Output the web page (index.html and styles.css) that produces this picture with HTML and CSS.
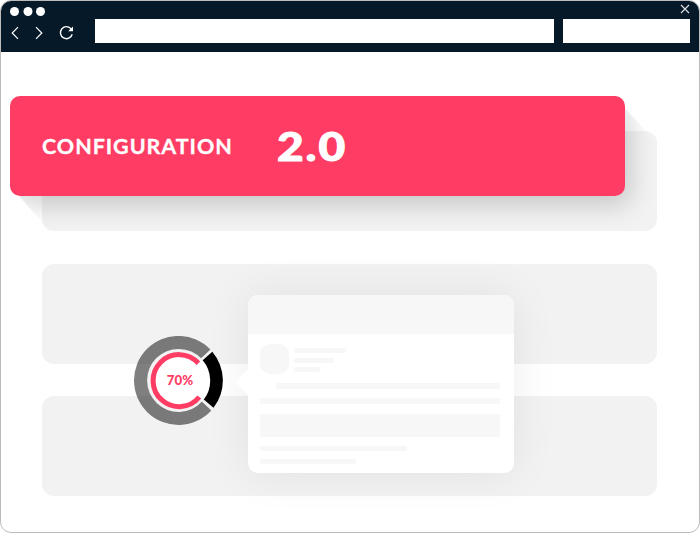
FILE: index.html
```html
<!DOCTYPE html>
<html lang="en">
<head>
<meta charset="utf-8">
<title>Configuration 2.0</title>
<link rel="stylesheet" href="styles.css">
</head>
<body>
<div class="window">
  <header class="toolbar">
    <svg class="controls" width="94" height="51" viewBox="1 1 94 51" fill="none" stroke="#fff" stroke-width="1.2">
      <g fill="#fff" stroke="none"><circle cx="14.5" cy="11.5" r="4.5"/><circle cx="28" cy="11.5" r="4.5"/><circle cx="40.5" cy="11.5" r="4.5"/></g>
      <path d="M18 27.2 12.2 33l5.8 5.8M36 27.2l5.8 5.8-5.8 5.8"/>
      <path d="M71.3 29.2A6 6 0 1 0 72.2 34.2" stroke-width="1.4"/>
      <path d="M73 26.5v4.8h-4.8z" fill="#fff" stroke="none"/>
    </svg>
    <div class="address"></div>
    <div class="search"></div>
    <svg class="close" width="10" height="10" viewBox="0 0 10 10" stroke="#dfe3e6" stroke-width="1.1"><path d="M1 1l8 8M9 1 1 9"/></svg>
  </header>
  <main class="page">
    <section class="panel">
      <div class="cast"></div>
      <div class="banner">
        <span class="label">CONFIGURATION</span>
        <span class="version">2.0</span>
      </div>
    </section>
    <section class="panel"></section>
    <section class="panel"></section>
  </main>
  <div class="gauge">
    <svg width="90" height="90" viewBox="134 336 90 90" fill="none">
      <circle cx="178.5" cy="380.5" r="31.5" fill="#f2f2f2"/>
      <path d="M179 380.5 201.5 358.5A31 31 0 0 1 202 402Z" fill="#fff"/>
      <circle cx="179.3" cy="380.8" r="26" fill="#fff"/>
      <path d="M210.4 349.4A44.5 44.5 0 1 0 211.3 410.5L202 401.5A31.5 31.5 0 1 1 201.5 358.8Z" fill="#000" fill-opacity=".5"/>
      <path d="M201 360.5 213 350M202.5 400 214 409.5" stroke="#f2f2f2" stroke-width="3.5"/>
      <path d="M212.3 351.7A44.5 44.5 0 0 1 213.5 407.8L203.8 399.6A31.5 31.5 0 0 0 202.7 360.2Z" fill="#000"/>
      <path d="M198.4 363.2A26 26 0 1 0 199.3 397" stroke="#fe3c64" stroke-width="5"/>
    </svg>
    <span class="percent">70%</span>
  </div>
  <article class="card">
    <div class="card-head"></div>
    <div class="profile">
      <div class="avatar"></div>
      <div class="lines"><i class="bar name"></i><i class="bar role"></i><i class="bar tag"></i></div>
    </div>
    <i class="bar first"></i>
    <i class="bar second"></i>
    <i class="bar block"></i>
    <i class="bar third"></i>
    <i class="bar fourth"></i>
  </article>
</div>
</body>
</html>
```
FILE: styles.css
```css
* { box-sizing: border-box; }
body { margin: 0; background: #fff; font-family: Lato, sans-serif; }
.window {
  position: relative;
  width: 700px;
  height: 533px;
  border: 1px solid #bcbcbc;
  border-radius: 11px;
  overflow: hidden;
  background: #fff;
}
.toolbar {
  position: relative;
  display: flex;
  height: 51px;
  background: #051929;
}
.controls { flex: none; }
.address, .search { height: 24px; margin-top: 18px; background: #fff; }
.address { width: 459px; }
.search { width: 127px; margin-left: 9px; }
.close { position: absolute; right: 9px; top: 3px; }
.page {
  display: flex;
  flex-direction: column;
  gap: 32px;
  padding: 79px 42px 0 41px;
}
.panel {
  position: relative;
  width: 615px;
  height: 100px;
  border-radius: 12px;
  background: #f2f2f2;
}
.panel:first-child { margin-bottom: 1px; }
.banner {
  position: absolute;
  left: -32px;
  top: -35px;
  width: 615px;
  height: 100px;
  border-radius: 10px;
  background: #fe3c64;
  color: #fff;
  display: flex;
  align-items: center;
  padding-left: 32px;
}
.cast {
  position: absolute;
  left: -32px;
  top: -35px;
  width: 647px;
  height: 135px;
  clip-path: polygon(0 91px, 8px 99px, 37px 132px, 60px 135px, 647px 135px, 647px 60px, 638px 37px, 615px 12px, 607px 0, 0 0);
}
.cast::before {
  content: "";
  position: absolute;
  left: 0;
  top: 0;
  width: 615px;
  height: 100px;
  border-radius: 10px;
  box-shadow: 5px 9px 26px rgba(0, 0, 0, .18);
}
.label {
  width: 235px;
  font-size: 21.5px;
  font-weight: 700;
  letter-spacing: .95px;
  white-space: nowrap;
  -webkit-text-stroke: .3px #fff;
}
.version {
  font-size: 39px;
  font-weight: 900;
  letter-spacing: 1.6px;
  transform: scaleX(1.18);
  transform-origin: left center;
  -webkit-text-stroke: 1px #fff;
}
.gauge {
  position: absolute;
  left: 133px;
  top: 335px;
  width: 90px;
  height: 90px;
}
.gauge svg { display: block; }
.percent {
  position: absolute;
  left: 1px;
  top: 37px;
  width: 90px;
  text-align: center;
  font-size: 12.5px;
  line-height: 15px;
  font-weight: 900;
  color: #fe3c64;
  transform: scaleX(1.06);
}
.card {
  position: absolute;
  left: 247px;
  top: 294px;
  width: 266px;
  height: 178px;
  border-radius: 10px;
  background: #fff;
  box-shadow: 0 0 46px rgba(0, 0, 0, .075);
}
.card::before {
  content: "";
  position: absolute;
  left: -13px;
  top: 74px;
  width: 13px;
  height: 26px;
  background: #fff;
  clip-path: polygon(100% 0, 0 50%, 100% 100%);
}
.card-head { height: 39px; border-radius: 10px 10px 0 0; background: #f7f7f7; }
.profile { display: flex; gap: 5px; margin: 10px 0 0 12px; }
.avatar { width: 29px; height: 30px; border-radius: 10px; background: #f7f7f7; }
.lines { padding-top: 4px; }
.bar {
  display: block;
  height: 5px;
  border-radius: 2px;
  background: #f7f7f7;
}
.name { width: 52px; }
.role { width: 40px; margin-top: 5px; }
.tag { width: 26px; margin-top: 4px; }
.first { width: 224px; height: 6px; margin: 9px 0 0 28px; }
.second { width: 240px; height: 6px; margin: 9px 0 0 12px; }
.block { width: 240px; height: 23px; margin: 10px 0 0 12px; }
.third { width: 147px; margin: 9px 0 0 12px; }
.fourth { width: 96px; margin: 8px 0 0 12px; }
```
